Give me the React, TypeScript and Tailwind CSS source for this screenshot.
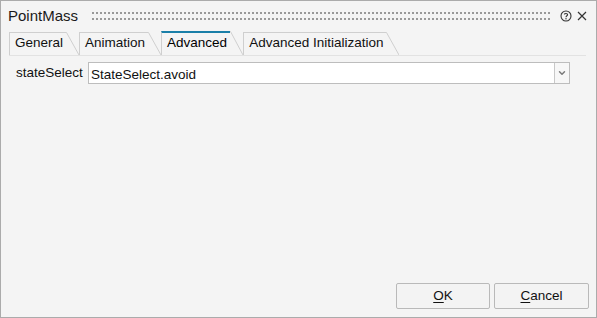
import { ChevronDown } from 'lucide-react';

const tabs = [
  { label: 'General' },
  { label: 'Animation' },
  { label: 'Advanced', active: true },
  { label: 'Advanced Initialization' },
];

const Tab = ({ label, active }: { label: string; active?: boolean }) => (
  <div className="flex h-[24px] items-stretch">
    <div
      className={
        'flex items-end whitespace-nowrap border-l border-[#cfcfcf] pb-[2px] pl-[5px] pr-[3px] text-[13.5px] ' +
        (active ? 'border-t-2 border-t-[#1a7fa8] text-black' : 'mt-[1px] border-t border-t-[#cfcfcf] text-[#111]')
      }
    >
      {label}
    </div>
    <svg width="13" height="24" viewBox="0 0 13 24" className="shrink-0">
      <path d={active ? 'M0 0.5 L0.5 0.5 L13 24' : 'M0 1.5 L0.5 1.5 L13 24'} stroke="#cfcfcf" fill="none" />
    </svg>
  </div>
);

export default function App() {
  return (
    <div
      className="flex h-[318px] w-[597px] flex-col border border-[#ababab] bg-[#f4f4f4] text-[#111]"
      style={{ fontFamily: '"Liberation Sans", Arial, sans-serif' }}
    >
      {/* Title bar */}
      <div className="flex h-[30px] items-center pl-[7px] pr-[8px]">
        <span className="text-[15px] text-[#1a1a1a]">PointMass</span>
        <svg className="ml-[14px] mr-[8px] h-[9px] flex-1">
          <defs>
            <pattern id="grip" width="4" height="6" patternUnits="userSpaceOnUse">
              <rect x="0" y="0" width="2" height="2" fill="#999999" />
            </pattern>
          </defs>
          <rect width="100%" height="9" fill="url(#grip)" />
        </svg>
        <svg width="12" height="12" viewBox="0 0 12 12" className="mr-[4px]">
          <circle cx="6" cy="6" r="5" stroke="#333" strokeWidth="1.1" fill="none" />
          <path d="M4.4 4.6 C4.4 3.2 7.6 3.2 7.6 4.7 C7.6 5.8 6 5.8 6 7.2" stroke="#333" strokeWidth="1.1" fill="none" />
          <circle cx="6" cy="8.8" r="0.7" fill="#333" />
        </svg>
        <svg width="12" height="12" viewBox="0 0 12 12">
          <path d="M2 2 L10 10 M10 2 L2 10" stroke="#333" strokeWidth="1.2" />
        </svg>
      </div>

      {/* Tabs */}
      <div className="mr-[10px] ml-[8px] flex border-b border-[#e2e2e2]">
        {tabs.map((t) => (
          <Tab key={t.label} {...t} />
        ))}
      </div>

      {/* Content */}
      <div className="mt-[6px] flex items-center pl-[15px] pr-[26px]">
        <span className="w-[72px] text-[13.5px]">stateSelect</span>
        <div className="flex h-[22px] flex-1 border border-[#bdbdbd] bg-white">
          <span className="flex-1 pl-[2px] pt-[2px] text-[13.5px]">StateSelect.avoid</span>
          <div className="flex w-[15px] items-center justify-center border-l border-[#c8c8c8] bg-[#f7f7f7]">
            <ChevronDown size={10} strokeWidth={3.5} className="text-[#7a7a7a]" />
          </div>
        </div>
      </div>

      <div className="flex-1" />

      {/* Buttons */}
      <div className="flex justify-end gap-[4px] pb-[8px] pr-[7px]">
        <button className="h-[26px] w-[94px] rounded-[2px] border border-[#b9b9b9] bg-[#f3f3f3] text-[13.5px]">
          <span className="underline underline-offset-2">O</span>K
        </button>
        <button className="h-[26px] w-[95px] rounded-[2px] border border-[#b9b9b9] bg-[#f3f3f3] text-[13.5px]">
          <span className="underline underline-offset-2">C</span>ancel
        </button>
      </div>
    </div>
  );
}
